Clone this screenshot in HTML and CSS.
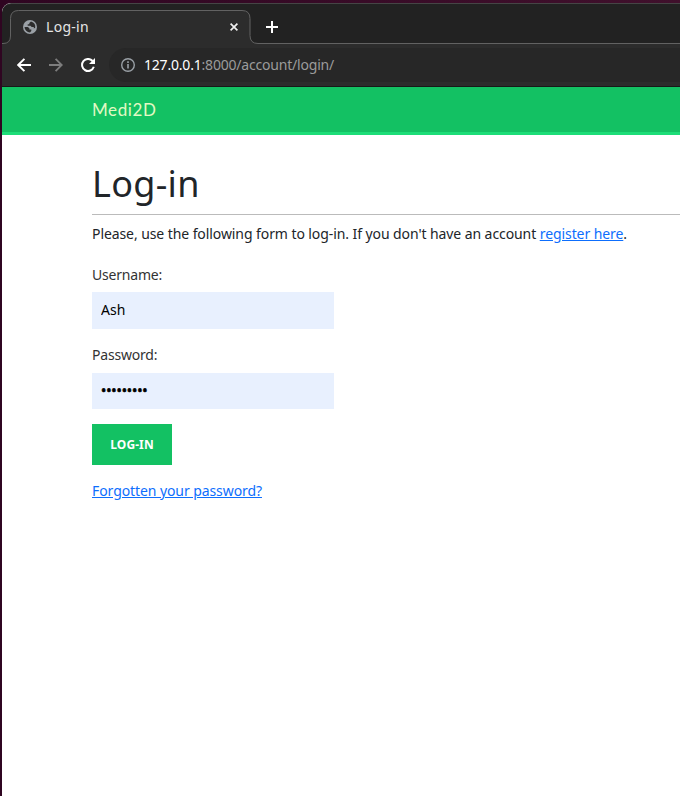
FILE: index.html
```
<!DOCTYPE html>
<html lang="en">
<head>
<meta charset="utf-8">
<title>Log-in</title>
<link rel="stylesheet" href="styles.css">
</head>
<body>
<div class="window">
  <div class="tabstrip">
    <svg class="outline" width="678" height="35" viewBox="0 0 678 35"><path d="M-1 33.5H1Q8.500 33.500 8.500 26V8.500Q8.500 .5 16.500 .5H240Q248 .5 248 8.500V25.500Q248 33.500 256 33.500H680V36H-1Z" fill="#2c2c2c" stroke="#626262"/></svg>
    <div class="tab">
      <svg class="globe" width="14" height="14" viewBox="0 0 14 14"><circle cx="7" cy="7" r="7" fill="#9aa0a6"/><path d="M8 1.4 6.3 3v1.3H4.7v1.4h2.7l1.3 1.4h2.1v1.4l1.4-.8A5.700 5.700 0 0 0 8 1.4ZM1.500 7h3.300l1.600 1.300v1.300h1.900V11L7 12.400A5.600 5.600 0 0 1 1.500 7Z" fill="#2c2c2c"/></svg>
      <span class="tab-title">Log-in</span>
      <svg class="close" width="8" height="8" viewBox="0 0 8 8"><path d="M.6.6l6.8 6.8M7.4.6L.6 7.4" stroke="#eee" stroke-width="1.7"/></svg>
    </div>
    <div class="new-tab">
      <svg width="12" height="12" viewBox="0 0 12 12"><path d="M6 0v12M0 6h12" stroke="#fff" stroke-width="2"/></svg>
    </div>
  </div>
  <div class="toolbar">
    <svg width="14" height="14" viewBox="0 0 14 14" fill="none" stroke="#fff" stroke-width="1.9"><path d="M14 7H1.5M7.4.8 1.2 7l6.2 6.2"/></svg>
    <svg width="14" height="14" viewBox="0 0 14 14" fill="none" stroke="#7d7d7d" stroke-width="1.8"><path d="M0 7h12.5M6.6.8 12.8 7l-6.2 6.2"/></svg>
    <svg width="14" height="14" viewBox="0 0 14 14" fill="none"><path d="M11.6 3A6 6 0 1 0 12.8 8.8" stroke="#fff" stroke-width="2"/><path d="M14 0v6H8Z" fill="#fff"/></svg>
    <div class="omnibox">
      <svg width="14" height="14" viewBox="0 0 14 14"><circle cx="7" cy="7" r="6.3" fill="none" stroke="#9aa0a6" stroke-width="1.4"/><path d="M7 6v4.6M7 3.3v1.6" stroke="#9aa0a6" stroke-width="1.6"/></svg>
      <span class="url"><b>127.0.0.1</b>:8000/account/login/</span>
    </div>
  </div>
  <header class="site-header"><span class="brand">Medi2D</span></header>
  <main>
    <h1>Log-in</h1>
    <p class="intro">Please, use the following form to log-in. If you don't have an account <a href="#">register here</a>.</p>
    <form>
      <label for="user">Username:</label>
      <input id="user" type="text" value="Ash">
      <label for="pass" class="second">Password:</label>
      <input id="pass" class="password" type="text" value="•••••••••">
      <button type="button">LOG-IN</button>
    </form>
    <a class="forgot" href="#">Forgotten your password?</a>
  </main>
</div>
</body>
</html>
```
FILE: styles.css
```
* { box-sizing: border-box; }
html { height: 100%; overflow: hidden; }
body {
  margin: 0;
  padding: 3px 0 0 2px;
  height: 796px;
  background: linear-gradient(90deg, #2f0521, #40102c);
  font: 14px/21px "Noto Sans", sans-serif;
  letter-spacing: -.083px;
  color: #212529;
  overflow: hidden;
}
.window { height: 793px; background: #fff; border-radius: 9px 0 0 0; overflow: hidden; }
.tabstrip {
  position: relative;
  display: flex;
  height: 41px;
  padding: 6px 0 0 8px;
  background: #222;
  border-top: 1px solid #454545;
  border-radius: 9px 0 0 0;
}
.outline { position: absolute; left: 0; top: 6px; }
.tab {
  position: relative;
  display: flex;
  align-items: center;
  width: 241px;
  height: 34px;
  padding: 0 13px;
}
.tab-title { margin: -1px 0 0 9px; color: #e5e5e5; letter-spacing: .3px; }
.close { margin-left: auto; }
.new-tab { position: relative; padding: 11px 0 0 15px; line-height: 0; }
.toolbar {
  display: flex;
  align-items: center;
  height: 43px;
  padding-left: 15px;
  gap: 18px;
  background: #2c2c2c;
  border-bottom: 1px solid #181818;
}
.omnibox {
  display: flex;
  align-items: center;
  flex: 1;
  height: 34px;
  margin-left: -4px;
  padding-left: 12px;
  background: #272727;
  border-radius: 17px 0 0 17px;
}
.url { margin: -2px 0 0 9px; color: #9b9b9b; letter-spacing: -.2px; }
.url b { font-weight: 400; color: #fff; }
.site-header { height: 48px; padding: 11px 0 0 90px; background: #13c163; border-bottom: 3px solid #1ddd78; }
.brand { font: 17px/24px Lato, sans-serif; letter-spacing: .6px; color: #e2f9c4; }
main { padding: 27px 0 0 90px; }
h1 { margin: 0; height: 53px; border-bottom: 1px solid #bbb; font: 400 36px/44px "Noto Sans", sans-serif; letter-spacing: .3px; }
.intro { margin: 8px 0 20px; white-space: nowrap; }
a { color: #0d6efd; text-underline-offset: 1px; }
form { display: flex; flex-direction: column; align-items: flex-start; }
label { color: #333; height: 21px; letter-spacing: -.2px; }
input {
  width: 242px;
  height: 37px;
  margin: 7px 0 0;
  padding: 0 9px 2px;
  border: 0;
  background: #e8f0fe;
  color: #000;
  font: 14px/21px "Noto Sans", sans-serif;
}
.second { margin-top: 15px; }
.password { height: 36px; margin-top: 8px; padding-bottom: 1px; letter-spacing: -.1px; -webkit-text-stroke: .6px #000; }
button {
  width: 80px;
  height: 41px;
  margin-top: 15px;
  padding: 0;
  border: 0;
  background: #13c163;
  color: #fff;
  font: bold 12px/18px "Noto Sans", sans-serif;
  letter-spacing: .1px;
}
.forgot { display: inline-block; margin-top: 15px; }
```
